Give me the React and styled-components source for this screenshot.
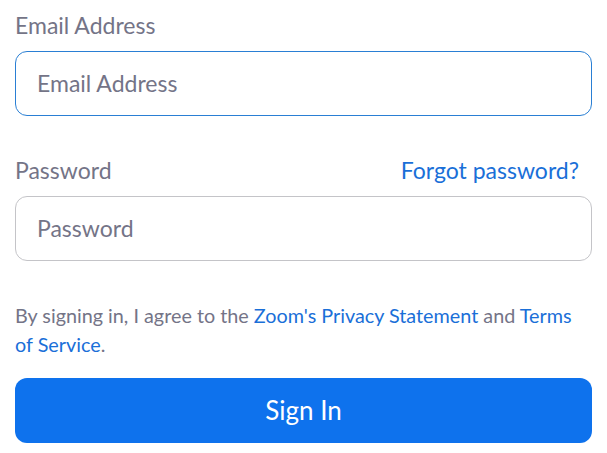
import React from "react";
import styled, { createGlobalStyle } from "styled-components";

const GlobalStyle = createGlobalStyle`
  html, body {
    margin: 0;
    padding: 0;
    background: #fff;
  }
  body {
    font-family: Lato, "Open Sans", sans-serif;
  }
  * {
    box-sizing: border-box;
  }
`;

const Form = styled.form`
  width: 607px;
  padding: 10px 15px 0 15px;
  display: flex;
  flex-direction: column;
`;

const LabelRow = styled.div`
  display: flex;
  justify-content: space-between;
  align-items: center;
  height: 30px;
  padding-right: 13px;
  margin-bottom: 11px;
`;

const Label = styled.label`
  font-size: 23px;
  color: #747487;
  line-height: 30px;
`;

const Link = styled.a`
  color: #1a6fd8;
  text-decoration: none;
  cursor: pointer;
`;

const ForgotLink = styled(Link)`
  font-size: 23px;
  line-height: 30px;
`;

const Input = styled.input`
  width: 100%;
  height: 65px;
  border-radius: 12px;
  border: 1px solid ${(p) => (p.$focused ? "#2a7fd4" : "#c4c4c8")};
  padding: 0 21px 2px 21px;
  font-family: Lato, sans-serif;
  font-size: 23px;
  color: #232333;
  outline: none;
  background: #fff;
  &::placeholder {
    color: #747487;
  }
`;

const Field = styled.div`
  display: flex;
  flex-direction: column;
  margin-bottom: ${(p) => p.$gap}px;
`;

const Terms = styled.p`
  margin: 2px 0 19px 0;
  font-size: 19.8px;
  line-height: 29px;
  color: #747487;
`;

const Button = styled.button`
  width: 100%;
  height: 65px;
  border: none;
  border-radius: 12px;
  background: #0e72ed;
  color: #fff;
  font-family: Lato, sans-serif;
  font-size: 26px;
  padding-bottom: 3px;
  cursor: pointer;
`;

export default function App() {
  return (
    <>
      <GlobalStyle />
      <Form onSubmit={(e) => e.preventDefault()}>
        <Field $gap={39}>
          <LabelRow>
            <Label>Email Address</Label>
          </LabelRow>
          <Input $focused placeholder="Email Address" autoFocus />
        </Field>
        <Field $gap={38}>
          <LabelRow>
            <Label>Password</Label>
            <ForgotLink>Forgot password?</ForgotLink>
          </LabelRow>
          <Input type="password" placeholder="Password" />
        </Field>
        <Terms>
          By signing in, I agree to the <Link>Zoom's Privacy Statement</Link>{" "}
          and <Link>Terms of Service</Link>.
        </Terms>
        <Button type="submit">Sign In</Button>
      </Form>
    </>
  );
}
